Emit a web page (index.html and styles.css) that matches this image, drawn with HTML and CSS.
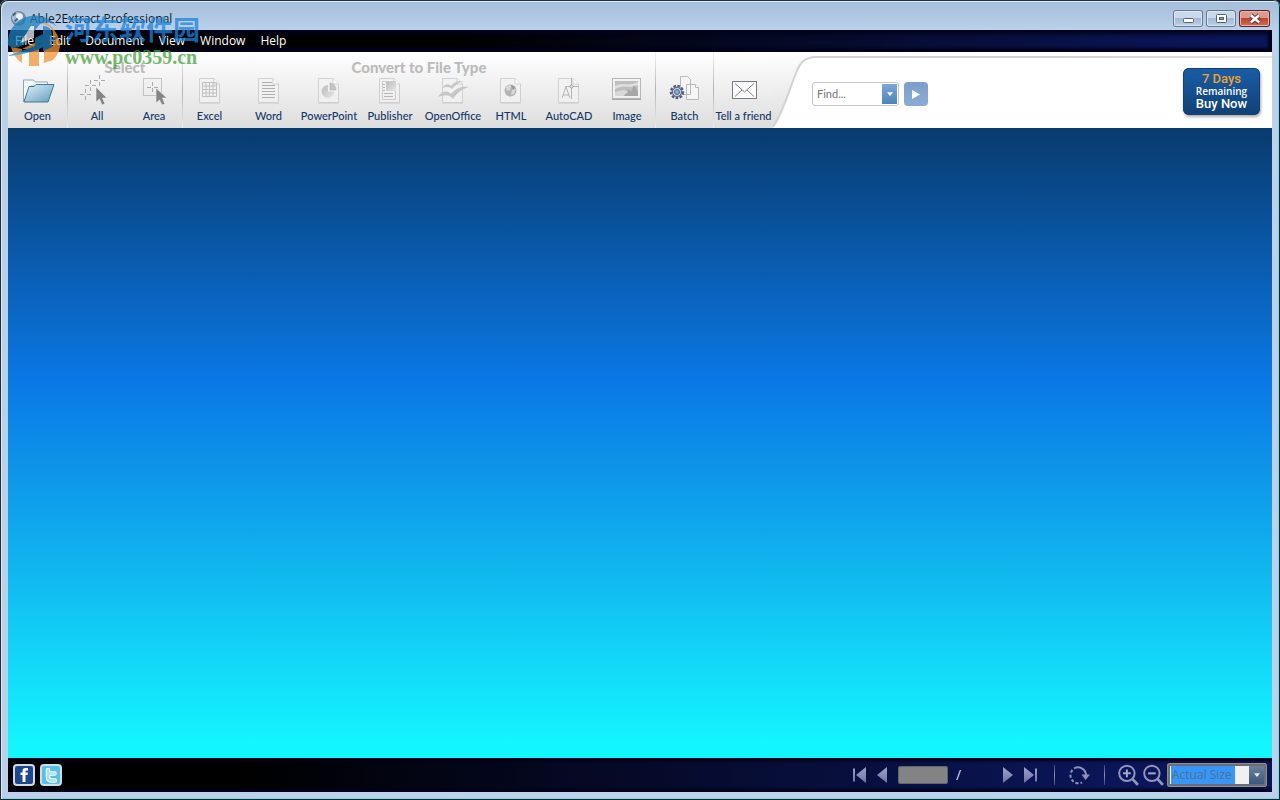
FILE: index.html
```html
<!DOCTYPE html>
<html lang="en">
<head>
<meta charset="utf-8">
<title>Able2Extract Professional</title>
<link rel="stylesheet" href="styles.css">
</head>
<body>
<svg class="defs" aria-hidden="true">
  <defs>
    <linearGradient id="folder" x1="0" y1="0" x2="1" y2="1"><stop offset="0" stop-color="#e4f3fa"/><stop offset="1" stop-color="#5f9dbd"/></linearGradient>
    <linearGradient id="ribbon" x1="0" y1="0" x2="0" y2="1"><stop offset="0" stop-color="#ffffff"/><stop offset=".35" stop-color="#f3f3f3"/><stop offset="1" stop-color="#dedede"/></linearGradient>
    <linearGradient id="nav" x1="0" y1="0" x2="0" y2="1"><stop offset="0" stop-color="#9ea3cc"/><stop offset="1" stop-color="#6c72a6"/></linearGradient>
    <linearGradient id="shade" x1="0" y1="0" x2="1" y2="1"><stop offset="0" stop-color="#b0b0b0"/><stop offset="1" stop-color="#e4e4e4"/></linearGradient>
    <g id="page">
      <path d="M5.500 3.500H20l5.500 5.500V27.500H5.500z" fill="#f2f2f2" stroke="#c9c9c9"/>
      <path d="M20 3.500V9h5.500" fill="#fff" stroke="#c9c9c9"/>
      <path d="M5 28.500H26" stroke="#d6d6d6"/>
    </g>
  </defs>
</svg>
<div class="window">
  <header class="titlebar">
    <svg class="app-icon" viewBox="0 0 18 18"><circle cx="9" cy="9" r="8" fill="#71869c"/><circle cx="8" cy="8" r="6" fill="#a9bccf"/><circle cx="10" cy="7" r="3.500" fill="#e9f1f8"/><path d="M5 12l3-3M3 6l3-3" stroke="#4a6078" stroke-width="2"/></svg>
    <h1 class="title">Able2Extract Professional</h1>
    <div class="win-buttons">
      <button class="win-btn" aria-label="Minimize"><svg viewBox="0 0 30 17"><rect x="10.500" y="8.500" width="10" height="4" rx="1" fill="#fff" stroke="#53606e"/></svg></button>
      <button class="win-btn" aria-label="Maximize"><svg viewBox="0 0 30 17"><rect x="10.500" y="4.500" width="10" height="8" rx="1" fill="#fff" stroke="#53606e"/><rect x="13.500" y="7.500" width="4" height="2" fill="#8ba6c4" stroke="#53606e"/></svg></button>
      <button class="win-btn close" aria-label="Close"><svg viewBox="0 0 30 17"><path d="M11.500 5l8 7M19.500 5l-8 7" stroke="#584048" stroke-width="4.500"/><path d="M11.500 5l8 7M19.500 5l-8 7" stroke="#fff" stroke-width="2.500"/></svg></button>
    </div>
  </header>
  <nav class="menubar">
    <button>File</button><button>Edit</button><button>Document</button><button>View</button><button>Window</button><button>Help</button>
  </nav>
  <section class="toolbar">
    <div class="ribbon">
      <div class="group open"><div class="tools">
        <button class="tool"><svg viewBox="0 0 34 32"><path d="M2.500 27V5h10l2 2h12v4H10z" fill="#f4f9fb" stroke="#8aa7b5"/><path d="M3 27L8 11.500h5l2-2h18L27 27z" fill="url(#folder)" stroke="#407b97"/></svg>Open</button>
      </div></div>
      <div class="group select"><h2>Select</h2><div class="tools">
        <button class="tool"><svg viewBox="0 0 34 32"><path d="M5.500 14v4M5.500 21v4M0 19.500h4M7 19.500h4M10.500 5v4M10.500 12v4M5 10.500h4M12 10.500h4M19.500 0v4M19.500 7v4M14 5.500h4M21 5.500h4" stroke="#aaa"/><path d="M16 12v15l3.500-3 2.500 6 3-1-2.500-6H27z" fill="#858585" stroke="#f2f2f2" stroke-width=".6"/></svg>All</button>
        <button class="tool"><svg viewBox="0 0 34 32"><rect x="6.500" y="3.500" width="18" height="17" fill="none" stroke="#999" stroke-dasharray="1 1"/><path d="M15.500 7v4M15.500 13v4M10 12.500h4M17 12.500h4" stroke="#aaa"/><path d="M19 13v15l3.500-3 2.500 5 3-1-2.500-6H30z" fill="#858585" stroke="#f2f2f2" stroke-width=".6"/></svg>Area</button>
      </div></div>
      <div class="group convert"><h2>Convert to File Type</h2><div class="tools">
        <button class="tool"><svg viewBox="0 0 32 32"><use href="#page"/><path d="M8.500 7.500h14v14h-14zM12 7v15M15.500 7v15M19 7v15M8 11h15M8 14.500h15M8 18h15" fill="none" stroke="#b5b5b5"/></svg>Excel</button>
        <button class="tool"><svg viewBox="0 0 32 32"><use href="#page"/><path d="M9 7.500h10M9 10.500h13M9 13.500h13M9 16.500h13M9 19.500h13M9 22.500h13" stroke="#a0a0a0"/></svg>Word</button>
        <button class="tool"><svg viewBox="0 0 32 32"><use href="#page"/><path d="M15 10a6.500 6.500 0 1 0 6.500 6.500H15z" fill="url(#shade)"/><path d="M17 8a7 7 0 0 1 6 7h-6z" fill="#bbb" stroke="#999" stroke-width=".5"/></svg>PowerPoint</button>
        <button class="tool"><svg viewBox="0 0 32 32"><use href="#page"/><path d="M8.500 6.500h13v18h-13z" fill="none" stroke="#999" stroke-dasharray="1 1"/><path d="M12 7h10v9H12z" fill="url(#shade)"/><path d="M9 9.500h2M9 12.500h2M9 15.500h2M10 18.500h9M10 21.500h9" stroke="#aaa"/></svg>Publisher</button>
        <button class="tool"><svg viewBox="0 0 32 32"><use href="#page"/><path d="M5 13c3-4 6-5 9-2 5-6 9-5 12-5-5 2-7 4-11 8-3-3-6-2-10-1zM1 22c4-6 9-7 13-3 6-7 12-8 18-7-7 2-11 5-16 12-4-5-9-4-15-2z" fill="#bdbdbd"/></svg>OpenOffice</button>
        <button class="tool"><svg viewBox="0 0 32 32"><use href="#page"/><circle cx="15.500" cy="15.500" r="6" fill="#a6a6a6"/><path d="M11 12q3-3 5-1l-1 4-3 1zM17 15l4-1-2 5-3 1z" fill="#d4d4d4"/><path d="M16 10l4 2-2 3z" fill="#858585"/></svg>HTML</button>
        <button class="tool"><svg viewBox="0 0 32 32"><use href="#page"/><path d="M9 23l4-11 4 11M10 20h6M18.500 3v21M12 11.500h14" fill="none" stroke="#a8a8a8"/><circle cx="18.500" cy="11.500" r="1.500" fill="#eee" stroke="#888"/></svg>AutoCAD</button>
        <button class="tool"><svg viewBox="0 0 32 32"><rect x="1.500" y="3.500" width="28" height="20" fill="#f2f2f2" stroke="#a9a9a9"/><path d="M1 24.500h29" stroke="#999"/><rect x="4" y="6" width="23" height="15" fill="#b2b2b2"/><path d="M4 11c8-4 14 1 23-4v3c-9 4-14-1-23 4z" fill="#dedede"/><path d="M13 21l5-7 2 3 3-7 4 7v4z" fill="#969696"/><path d="M4 17l9-2 4 2-5 4H4z" fill="#d4d4d4"/></svg>Image</button>
      </div></div>
      <div class="group batch"><div class="tools">
        <button class="tool"><svg viewBox="0 0 32 32"><path d="M11.500 1.500h7l3 3v15h-10zM17.500 9.500h9l3 3v12h-12z" fill="#f5f5f5" stroke="#b9b9b9"/><path d="M26.500 9.500v3h3" fill="#fff" stroke="#b9b9b9"/><circle cx="8" cy="17" r="6" fill="#b2bccb" stroke="#505f7a" stroke-width="2.500" stroke-dasharray="2.500 1.500"/><circle cx="8" cy="17" r="4.500" fill="#d2d9e2" stroke="#59687f"/><circle cx="8" cy="17" r="2.500" fill="#8caed0" stroke="#476b91"/></svg>Batch</button>
      </div></div>
      <div class="group friend"><div class="tools">
        <button class="tool"><svg viewBox="0 0 32 32"><rect x="4.500" y="6.500" width="24" height="17" fill="#fbfbfb" stroke="#777c82"/><path d="M7 8.500l9.500 8.500L26 8.500M7 21.500l7-6.500M26 21.500l-7-6.500" fill="none" stroke="#818181"/></svg>Tell a friend</button>
      </div></div>
    </div>
    <svg class="curve" viewBox="0 0 43 76" preserveAspectRatio="none"><path d="M0 0H43V4C31 4 27 10 23 20C15 40 10 61 0 74z" fill="url(#ribbon)"/><path d="M43 5C31 5 27 11 23 21C15 41 10 61 0 75" fill="none" stroke="#d2d2d2" stroke-width="2"/></svg>
    <div class="search-area">
      <form class="find" onsubmit="return false">
        <div class="find-box"><input type="text" aria-label="Find" placeholder="Find..."><button type="button" class="drop" aria-label="Search history"><svg viewBox="0 0 8 5"><path d="M0 0h8L4 5z" fill="#fff"/></svg></button></div>
        <button class="go" aria-label="Search"><svg viewBox="0 0 8 9"><path d="M0 0l8 4.500L0 9z" fill="#fff"/></svg></button>
      </form>
      <button class="buy"><span class="days">7 Days</span><span class="remaining">Remaining</span><span class="now">Buy Now</span></button>
    </div>
  </section>
  <main class="canvas"></main>
  <footer class="statusbar">
    <a class="social" href="#" aria-label="Facebook"><svg viewBox="0 0 22 22"><rect x="1" y="1" width="20" height="20" rx="3" fill="#1c4791" stroke="#d5d8de" stroke-width="2"/><path d="M9.500 18v-7H7.500V8.500h2V7q0-3 3-3H15v2.500h-1.500q-1 0-1 1v1H15L14.500 11h-2v7z" fill="#fff"/></svg></a>
    <a class="social" href="#" aria-label="Twitter"><svg viewBox="0 0 22 22"><rect x="1" y="1" width="20" height="20" rx="3" fill="#58bfe8" stroke="#cfdfe6" stroke-width="2"/><path d="M8 6v7q0 3.500 4 3.500h3M8 9.500h6.500" fill="none" stroke="#fff" stroke-width="4.500" stroke-linecap="round"/><path d="M8 6v7q0 3.500 4 3.500h3M8 9.500h6.500" fill="none" stroke="#a6e1f5" stroke-width="2.500" stroke-linecap="round"/></svg></a>
    <div class="controls">
      <button class="icon" aria-label="First page"><svg viewBox="0 0 20 20"><path d="M4 3.500h2v13H4zM17 2v16L7 10z" fill="url(#nav)"/></svg></button>
      <button class="icon" aria-label="Previous page"><svg viewBox="0 0 20 20"><path d="M15 2v16L5 10z" fill="url(#nav)"/></svg></button>
      <input class="page-no" type="text" aria-label="Page number">
      <span class="slash">/</span>
      <button class="icon" aria-label="Next page"><svg viewBox="0 0 20 20"><path d="M5 2v16l10-8z" fill="url(#nav)"/></svg></button>
      <button class="icon" aria-label="Last page"><svg viewBox="0 0 20 20"><path d="M14 3.500h2v13h-2zM3 2v16l10-8z" fill="url(#nav)"/></svg></button>
      <span class="sep"></span>
      <button class="icon rotate" aria-label="Rotate"><svg viewBox="0 0 24 24"><path d="M7 5.500A8 8 0 0 1 19 12" fill="none" stroke="#8d91bd" stroke-width="2"/><path d="M14.500 11.500H23L18.500 17z" fill="#8d91bd"/><path d="M5.500 7A8 8 0 0 0 15 19.500" fill="none" stroke="#8d91bd" stroke-width="2" stroke-dasharray="3 2"/></svg></button>
      <span class="sep"></span>
      <button class="icon zoom" aria-label="Zoom in"><svg viewBox="0 0 20 20"><circle cx="9" cy="8.500" r="7" fill="none" stroke="#9296bd" stroke-width="1.800"/><path d="M14 13.500l5 5.500" stroke="#9296bd" stroke-width="2.500"/><path d="M5.500 8.500h7M9 5v7" stroke="#a5a8c9" stroke-width="1.800"/></svg></button>
      <button class="icon zoom" aria-label="Zoom out"><svg viewBox="0 0 20 20"><circle cx="9" cy="8.500" r="7" fill="none" stroke="#9296bd" stroke-width="1.800"/><path d="M14 13.500l5 5.500" stroke="#9296bd" stroke-width="2.500"/><path d="M5.500 8.500h7" stroke="#a5a8c9" stroke-width="1.800"/></svg></button>
      <div class="zoom-box"><input type="text" aria-label="Zoom level" value="Actual Size"><button class="zoom-drop" aria-label="Zoom levels"><svg viewBox="0 0 8 5"><path d="M0 0h8L4 5z" fill="#e8edf0"/></svg></button></div>
    </div>
  </footer>
  <aside class="watermark">
    <svg viewBox="0 0 58 58"><path d="M6 37A27 27 0 0 0 17 53V39H24V56H34V37Q33 31 27 34L17 39z" fill="#f29335"/><path d="M38 14Q48 15 48 25V50Q56 42 55 32Q51 17 38 11z" fill="#f29335"/><path d="M39 40L48 36V50L39 53z" fill="#f29335"/><path d="M3 35A27 27 0 0 1 52 17Q45 10 35 14L19 34Q9 41 3 35z" fill="#1e80bd"/><path d="M26 16L15 33 29 28V16z" fill="#e6eef2"/><path d="M38 16Q47 16 47 25V37L38 41V33L30 36V28L38 24z" fill="#1e80bd"/><path d="M2 46Q32 36 54 26Q38 43 2 46z" fill="#1e80bd"/></svg>
    <p class="site"><span class="site-name">河东软件园</span><span class="site-url">www.pc0359.cn</span></p>
  </aside>
</div>
</body>
</html>
```
FILE: styles.css
```css
* { box-sizing: border-box; }
body { margin: 0; background: #15202b; font-family: "Open Sans", "Noto Sans", sans-serif; }
button { border: 0; padding: 0; margin: 0; background: none; font: inherit; color: inherit; }
input { border: 0; padding: 0; margin: 0; min-width: 0; font: inherit; border-radius: 0; outline: 0; }
svg { display: block; }
.defs { position: absolute; width: 0; height: 0; }

.window {
  position: relative;
  display: flex;
  flex-direction: column;
  min-height: 100vh;
  padding: 0 8px 8px;
  border-radius: 7px 7px 0 0;
  background: linear-gradient(#a3bcd9, #bbd1ea 30px, #bbd1ea);
  box-shadow: inset 1px 1px 0 #22303c, inset -1px -1px 0 #18262e, inset 2px 2px 0 #dde9f5, inset -2px -2px 0 #79d5e8;
}

.titlebar { display: flex; align-items: center; gap: 3px; height: 30px; padding: 7px 2px 0 2px; }
.app-icon { width: 17px; height: 17px; }
.title { flex: 1; margin: 0; font-size: 12px; font-weight: 400; line-height: 20px; color: #111820; }
.win-buttons { display: flex; gap: 3px; }
.win-btn {
  width: 30px;
  height: 17px;
  border-radius: 3px;
  background: linear-gradient(#c9d8ea 45%, #a4bad5 50%, #bed1e6);
  box-shadow: inset 0 0 0 1px #66798f, inset 0 0 0 2px #d9e5f2;
}
.win-btn.close { width: 31px; background: linear-gradient(#dd9a8a 45%, #c0442c 50%, #d4735a); box-shadow: inset 0 0 0 1px #5c2430, inset 0 0 0 2px #e8b4a8; }

.menubar {
  display: flex;
  gap: 15px;
  height: 22px;
  padding-left: 7px;
  font-size: 12px;
  line-height: 22px;
  color: #fff;
  background: linear-gradient(90deg, #000 35%, #0b1659 96%);
  box-shadow: inset 0 -5px 3px -1px #02031a, inset 0 5px 4px -1px #02031a, inset -5px 0 3px -1px #02031a;
}

.toolbar { display: flex; height: 76px; background: #fff; }
.ribbon { display: flex; background: linear-gradient(#fff, #f3f3f3 35%, #dedede); }
.group { display: flex; flex-direction: column; justify-content: flex-end; }
.group + .group { border-left: 1px solid; border-image: linear-gradient(#f4f4f4, #b2b2b2 50%, #eee) 1; }
.group h2 {
  margin: 0;
  font: 900 15px/16px Lato, sans-serif;
  text-align: center;
  color: #bbb;
}
.tools { display: grid; padding-bottom: 4px; }
.open .tools { grid-template-columns: 59px; }
.select .tools { grid-template-columns: 58px 56px; }
.convert .tools { grid-template-columns: 53px 65px 56px 66px 60px 56px 60px 56px; }
.batch .tools { grid-template-columns: 57px; }
.friend .tools { grid-template-columns: 59px; }
.tool {
  display: flex;
  flex-direction: column;
  align-items: center;
  font: 500 11px/16px Lato, sans-serif;
  white-space: nowrap;
  color: #12386a;
}
.tool svg { height: 32px; margin-bottom: 1px; }
.convert .tool svg { opacity: .8; }
.curve { width: 43px; height: 76px; }
.search-area {
  flex: 1;
  display: flex;
  align-items: flex-start;
  justify-content: space-between;
  margin-top: 4px;
  padding: 10px 12px 0 0;
  border-top: 2px solid;
  border-image: linear-gradient(90deg, #d2d0d2 50%, #e2e0e2) 1;
}
.find { display: flex; gap: 5px; margin: 14px 0 0 -4px; }
.find-box { display: flex; width: 87px; height: 24px; padding: 1px; border: 1px solid #c5c7cb; border-radius: 3px; background: #fff; }
.find-box input { flex: 1; padding-left: 3px; font: 11px/20px Lato, sans-serif; background: transparent; }
.find-box input::placeholder { color: #777; opacity: 1; }
.drop { display: grid; place-items: center; width: 15px; background: linear-gradient(#7ba9d6, #4f83b9); }
.drop svg { width: 6px; height: 4px; }
.go { display: grid; place-items: center; width: 24px; height: 24px; border-radius: 4px; background: linear-gradient(#7c9fcb, #8aabd3); }
.go svg { width: 8px; height: 9px; }
.buy {
  display: flex;
  flex-direction: column;
  align-items: center;
  width: 77px;
  padding: 4px 0;
  border-radius: 6px;
  color: #fff;
  background: linear-gradient(#195ea8, #104076);
  box-shadow: inset 0 0 0 1px #173e70, 1px 2px 3px #aaa;
}
.days { font: 500 13px/14px Roboto, sans-serif; color: #f0a22a; }
.remaining { font: 600 10px/11px "Open Sans", sans-serif; }
.now { font: 500 13px/14px Roboto, sans-serif; }

.canvas { flex: 1; background: linear-gradient(#093b6e, #0a78e6 40%, #10b1ee 68%, #13f6ff 98%); }

.statusbar {
  display: flex;
  align-items: center;
  gap: 5px;
  height: 34px;
  padding: 0 5px;
  background: linear-gradient(90deg, #000 18%, #0b1659 88%);
  box-shadow: inset 0 5px 3px -2px #02031a, inset 0 -5px 3px -2px #02031a;
}
.social svg { width: 22px; height: 22px; }
.controls { display: flex; align-items: center; gap: 3px; margin-left: auto; }
.icon svg { width: 20px; height: 20px; }
.icon.rotate svg { width: 24px; height: 24px; }
.icon.zoom svg { width: 22px; height: 22px; }
.page-no { width: 50px; height: 18px; margin-left: 3px; border-radius: 3px; background: #838383; box-shadow: inset 0 0 0 1px #62646c; text-align: center; }
.slash { width: 8px; margin: 0 31px 0 5px; font-size: 14px; line-height: 18px; color: #dde; }
.sep { width: 1px; height: 20px; margin: 0 9px 0 10px; background: linear-gradient(#3b4379, #8d90af, #3b4379); }
.zoom-box { display: flex; width: 100px; height: 24px; padding: 3px; border-radius: 3px; background: #6d6e75; box-shadow: inset 0 0 0 1px #8e8b88; }
.zoom-box input { flex: 1; padding-left: 2px; font-size: 12px; line-height: 18px; color: #526f8e; background: linear-gradient(90deg, #fff 1px, #3597fa 1px 65px, #f0f0f0 65px); }
.zoom-drop { display: grid; place-items: center; width: 15px; background: linear-gradient(#6a8199, #395a7c); }
.zoom-drop svg { width: 6px; height: 4px; }

.watermark { position: absolute; left: 5px; top: 10px; display: flex; gap: 2px; opacity: .75; pointer-events: none; }
.watermark svg { width: 58px; height: 58px; }
.site { display: flex; flex-direction: column; margin: 3px 0 0; }
.site-name { font: 700 27px/32px "Noto Sans CJK SC", sans-serif; color: #1b85dd; }
.site-url { font: 700 20px/24px "Liberation Serif", serif; color: #43a336; }
```
